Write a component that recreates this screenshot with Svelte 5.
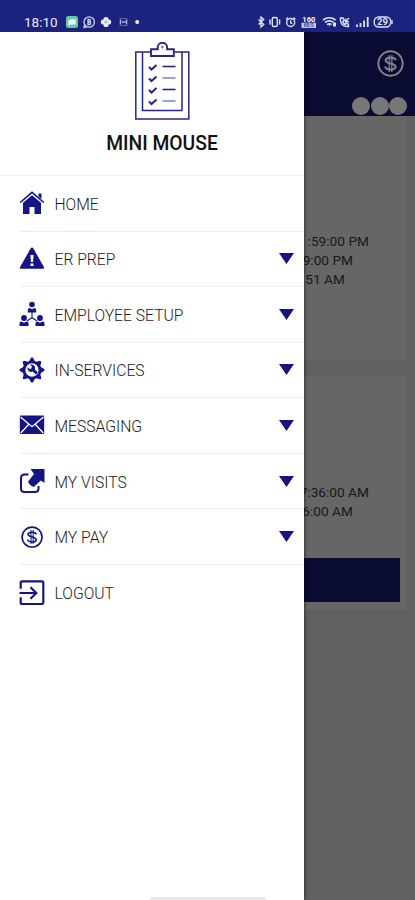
<script lang="ts">
  type Item = { icon: string; label: string; expandable: boolean };

  const items: Item[] = [
    { icon: 'home', label: 'HOME', expandable: false },
    { icon: 'alert', label: 'ER PREP', expandable: true },
    { icon: 'team', label: 'EMPLOYEE SETUP', expandable: true },
    { icon: 'gear', label: 'IN-SERVICES', expandable: true },
    { icon: 'mail', label: 'MESSAGING', expandable: true },
    { icon: 'share', label: 'MY VISITS', expandable: true },
    { icon: 'pay', label: 'MY PAY', expandable: true },
    { icon: 'logout', label: 'LOGOUT', expandable: false }
  ];

  // end = distance from the card's right edge to the end of the line
  const firstVisit = [
    { text: ':59:00 PM', end: 38 },
    { text: '9:00 PM', end: 54 },
    { text: '51 AM', end: 62 }
  ];
  const secondVisit = [
    { text: '7:36:00 AM', end: 38 },
    { text: '6:00 AM', end: 54 }
  ];

  const teeth = [0, 45, 90, 135, 180, 225, 270, 315];
  const checks = [31, 42.5, 54, 65.5];
</script>

{#snippet dollar()}
  <g fill="none" stroke="currentColor">
    <circle cx="13" cy="13" r="11.7" stroke-width="1.9" />
    <path d="M18 9.8C17.6 6.800 8.300 6.300 8.300 9.800c0 4.100 9.600 2.100 9.600 6.300 0 3.800-9.600 3.500-10-.2" stroke-width="2" />
    <path d="M11.800 4.800v16.400M14.300 4.800v16.400" stroke-width="1.200" />
  </g>
{/snippet}

<div class="phone">
  <header class="status">
    <span class="time">18:10</span>
    <svg class="notices" width="76" height="14" viewBox="0 0 76 14">
      <rect x="0" y="1" width="12" height="12" rx="2.5" fill="#64c9a5" />
      <path d="M2.5 5.5Q6 3.500 9.500 4.500v5H5l-2.500 1z" fill="#fff" />
      <g fill="none" stroke="#cfd3f3">
        <circle cx="23.2" cy="7" r="5.2" stroke-width="1.3" />
        <path d="M18.8 9.500l-.8 3 3-.8" stroke-width="1.3" />
        <path d="M22 4.500v5h1.400a1.200 1.200 0 0 0 0-2.500H22h1.200a1.200 1.200 0 0 0 0-2.500z" stroke-width="1.3" />
      </g>
      <g fill="#e8e9fb">
        <circle cx="40" cy="4.500" r="2.600" />
        <circle cx="37.300" cy="7" r="2.500" />
        <circle cx="42.700" cy="7" r="2.500" />
        <circle cx="40" cy="9.500" r="2.600" />
      </g>
      <path d="M38 7h4M40 5.500v3" stroke="#a3a7d6" stroke-width="1" />
      <path d="M53.500 3.500h8M53.500 10.500h8" stroke="#5a61ad" stroke-width="1" />
      <path d="M54.500 4.500v5M60.500 4.500v5M56 7h3.500" stroke="#aeb3df" stroke-width="1.500" />
      <circle cx="71.200" cy="7" r="2" fill="#fff" />
    </svg>
    <svg class="system" width="138" height="14" viewBox="0 0 138 14">
      <g fill="none" stroke="#dfe1f7" stroke-width="1.4">
        <path d="M1.500 4.500l5.200 5-2.700 2.500v-10l2.700 2.500-5.200 5" />
        <rect x="15.300" y="2.500" width="5" height="9" rx="1.500" />
        <path d="M13 4.500v5M22.600 4.500v5" />
        <circle cx="33.700" cy="7.500" r="4" />
        <path d="M33.700 5.300v2.500l1.600.8M29 4.500l2-2M38.400 4.500l-2-2" />
        <path d="M66 5q6.300-4.500 12.600 0M68 7.400q4.300-3 8.600 0M70 9.600q2.300-1.600 4.600 0" stroke-width="1.600" />
        <path d="M83.500 3v2.500c.3 3.600 2.500 5.600 6.500 6h1.500V9.200L89 8.400l-1 1c-1.300-.6-2-1.500-2.300-2.600L87 5.500 86 3zM92 3l-3.500 3.500M88.500 3.500v3.200h3.500" />
        <rect x="117.200" y="2" width="16.500" height="10" rx="4.500" />
      </g>
      <path d="M72.300 11l-1.700-1.700h3.400zM76 7.500h3v4h-3z" fill="#dfe1f7" />
      <path d="M99 12v-2.500h1.800V12zM102.600 12V8h1.800v4zM106.200 12V5.500h1.800V12zM109.800 12V2h1.800v10z" fill="#dfe1f7" />
      <path d="M135 5v4" stroke="#dfe1f7" stroke-width="1.300" />
      <rect x="44.500" y="7.700" width="14.500" height="5.300" rx=".5" fill="#c7cbed" />
      <text x="51.800" y="6.700" class="rate" text-anchor="middle">160</text>
      <text x="51.800" y="12" class="unit" text-anchor="middle">KB/S</text>
      <text x="125.400" y="10.400" class="battery" text-anchor="middle">29</text>
    </svg>
  </header>

  <main class="page">
    <div class="topbar">
      <svg class="coin" width="27" height="27" viewBox="0 0 26 26">{@render dollar()}</svg>
      <div class="dots"><i></i><i></i><i></i></div>
    </div>
    <section class="card first">
      {#each firstVisit as line}
        <p style="padding-right: {line.end}px">{line.text}</p>
      {/each}
    </section>
    <section class="card second">
      {#each secondVisit as line}
        <p style="padding-right: {line.end}px">{line.text}</p>
      {/each}
      <div class="action"></div>
    </section>
  </main>

  <aside class="drawer">
    <div class="profile">
      <svg width="56" height="80" viewBox="0 0 56 80">
        <g fill="none" stroke="#26268c" stroke-width="1.5">
          <path d="M16 10H1.800v67h53V10H40" />
          <path d="M8.500 10v58.500h39.500V10" />
          <path d="M17 14V7.200h6.700V5.500a4.700 4.700 0 0 1 9.400 0v1.700h6.700V14z" fill="#fff" stroke-width="1.900" />
          <circle cx="28.400" cy="5.200" r=".8" stroke-width=".8" />
        </g>
        {#each checks as y, i}
          <path d="M15 {y - 6}l2.500 2.500 5-4.500" fill="none" stroke="#26268c" stroke-width="2" />
          <path d="M28.500 {y - 6.500}h13" stroke={i % 2 ? '#8888bb' : '#26268c'} stroke-width="1.600" />
        {/each}
      </svg>
      <h1>MINI MOUSE</h1>
    </div>

    <nav>
      {#each items as item}
        <div class="item">
          <svg class="icon" width="26" height="26" viewBox="0 0 26 26">
            {#if item.icon === 'home'}
              <path d="M19.500 3.500h3v5.500l-3-2.500z" />
              <path d="M1.200 12.500L13 2.300l11.800 10.200" fill="none" stroke="currentColor" stroke-width="1.600" />
              <path d="M4 12.700L13 5.200l9 7.500V24h-6.500v-7h-5v7H4z" />
            {:else if item.icon === 'alert'}
              <path d="M13 1.500q.9 0 1.400 1l10.600 18.700q.6 1.500-.9 1.500H1.900q-1.500 0-.9-1.500L11.600 2.500q.5-1 1.400-1z" />
              <path d="M11.400 9h3.200l-.5 7h-2.200zM11.500 17.500h3v2.600h-3z" fill="#fff" />
            {:else if item.icon === 'team'}
              <circle cx="13" cy="3.500" r="2.800" />
              <path d="M8.800 11.500V8.700q0-1.800 2-1.800l2.200 1.300 2.200-1.300q2 0 2 1.800v2.800z" />
              <path d="M13 11v6M13 16.500l-5 3.500M13 16.500l5 3.500" fill="none" stroke="currentColor" stroke-width="1.100" />
              <circle cx="5" cy="17" r="2.900" />
              <circle cx="21" cy="17" r="2.900" />
              <path d="M.5 25v-2.700q0-1.700 2-1.700L5 21.800l2.500-1.200q2 0 2 1.700V25zM16.500 25v-2.700q0-1.700 2-1.700l2.500 1.200 2.500-1.200q2 0 2 1.700V25z" />
            {:else if item.icon === 'gear'}
              {#each teeth as angle}
                <path d="M9.600 5.200L12 .8q1-.8 2 0l2.400 4.400z" transform="rotate({angle} 13 13)" />
              {/each}
              <circle cx="13" cy="13" r="8" fill="#fff" stroke="currentColor" stroke-width="2.700" />
              <path d="M8.400 10l2.100 2 1.900-.5.500-1.900-1.900-2q3.400-.8 4.800 1.800.7 1.600 0 3l3 3.200-2 2-3.100-3q-2 .8-3.900-.4-1.900-1.400-1.400-4.200z" />
            {:else if item.icon === 'mail'}
              <rect x=".8" y="3.500" width="24.400" height="18.500" rx="1.200" />
              <path d="M1.500 5l11.500 9.700L24.500 5M1.800 21l8.200-9M24.200 21l-8.200-9" fill="none" stroke="#fff" stroke-width="1.300" />
            {:else if item.icon === 'share'}
              <path d="M9.500 6.500H5.500Q2 6.500 2 10v10.500Q2 24 5.500 24H16q3.500 0 3.500-3.500V18" fill="none" stroke="currentColor" stroke-width="2" />
              <path d="M11.500 1h14v14l-3.700-2.500-7 6.500q-3.500-1-5.800-5.300l6-7.700z" />
            {:else if item.icon === 'pay'}
              <g transform="translate(2 2) scale(.85)">{@render dollar()}</g>
            {:else}
              <path d="M1.700 8.800V2.700q0-1.300 1.300-1.300h20q1.300 0 1.300 1.300v20q0 1.300-1.300 1.300H3q-1.300 0-1.300-1.300v-5.500" fill="none" stroke="currentColor" stroke-width="2.200" />
              <path d="M.5 13h17M11.500 7.200l5.800 5.800-5.800 5.800" fill="none" stroke="currentColor" stroke-width="2.200" />
            {/if}
          </svg>
          <span class="label">{item.label}</span>
          {#if item.expandable}
            <svg class="caret" width="15" height="11" viewBox="0 0 15 11"><path d="M0 0h15L7.500 11z" /></svg>
          {/if}
        </div>
      {/each}
    </nav>
    <div class="handle"></div>
  </aside>
</div>

<style>
  :global(body) { margin: 0; }
  .phone {
    position: relative; width: 415px; height: 900px; overflow: hidden;
    display: flex; flex-direction: column; background: #606060;
    font-family: Roboto, sans-serif;
  }

  .status {
    height: 32px; box-sizing: border-box; padding: 15px 20px 0 24px; flex: none;
    display: flex; align-items: flex-start; background: #1b237e; color: #e9eafa;
  }
  .time { font-size: 13.5px; line-height: 15px; width: 42px; }
  .system { margin-left: auto; }
  .rate { font-size: 7.5px; font-weight: 700; fill: #fff; }
  .unit { font-size: 4.5px; font-weight: 700; fill: #454b99; }
  .battery { font-size: 9.5px; font-weight: 700; fill: #dfe1f7; }

  .page { flex: 1; display: flex; flex-direction: column; }
  .topbar {
    height: 84px; box-sizing: border-box; padding: 18px 8px 0 0; flex: none;
    display: flex; flex-direction: column; align-items: flex-end;
    background: #090b33; color: #858585;
  }
  .coin { margin-right: 3px; }
  .dots { display: flex; gap: 0.5px; margin-top: 20px; }
  .dots i { width: 18px; height: 18px; border-radius: 50%; background: #777; }
  .card { margin: 0 8px 0 0; box-sizing: border-box; background: #666; text-align: right; }
  .card p { margin: 0; font-size: 13.7px; line-height: 19px; color: #181818; }
  .first { height: 244px; padding-top: 116px; }
  .second { height: 234px; margin-top: 16px; padding-top: 107px; }
  .action { height: 44px; margin: 37px 7px 0 0; background: #090b33; }

  .drawer {
    position: absolute; top: 32px; left: 0; width: 304px; height: 868px;
    display: flex; flex-direction: column; background: #fff;
    box-shadow: 0 0 4px rgba(0, 0, 0, 0.7); clip-path: inset(0 -8px 0 0);
  }
  .profile {
    height: 144px; box-sizing: border-box; padding: 10px 0 0 20px; flex: none;
    display: flex; flex-direction: column; align-items: center;
    border-bottom: 1px solid #f0f0f0;
  }
  h1 { margin: 10px 0 0; font-size: 19.3px; line-height: 24px; font-weight: 500; color: #111; }
  .item {
    height: 55.55px; box-sizing: border-box; margin-left: 20px; padding-right: 10px;
    display: flex; align-items: center; border-bottom: 1px solid #ededed; color: #141482;
  }
  .item:last-child { border: none; }
  .icon { flex: none; margin-left: -1px; fill: currentColor; }
  .label { margin-left: 9.5px; padding-top: 2px; font-size: 15.7px; font-weight: 300; color: #1c1c1c; white-space: nowrap; }
  .caret { margin-left: auto; fill: currentColor; }
  .handle { width: 116px; height: 3px; margin: auto 0 0 150px; background: #e9e9e9; }
</style>
